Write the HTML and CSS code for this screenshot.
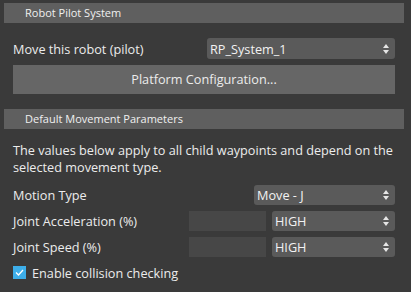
FILE: index.html
```html
<!DOCTYPE html>
<html lang="en">
<head>
    <meta charset="UTF-8">
    <title>Robot Pilot System</title>
    <link rel="stylesheet" href="styles.css">
</head>
<body>
    <div class="panel">
        <div class="section-head">Robot Pilot System</div>
        <div class="section">
            <div class="row pilot-row">
                <span class="label">Move this robot (pilot)</span>
                <div class="select">
                    <span>RP_System_1</span>
                    <svg class="arrows" width="6" height="10" viewBox="0 0 6 10"><path d="M3 0L6 4H0Z M3 10L6 6H0Z" fill="#e6e6e6"/></svg>
                </div>
            </div>
            <div class="button">Platform Configuration...</div>
        </div>

        <div class="section-head">Default Movement Parameters</div>
        <div class="section">
            <p class="note">The values below apply to all child waypoints and depend on the selected movement type.</p>
            <div class="params">
                <span class="label">Motion Type</span>
                <div class="select motion">
                    <span>Move - J</span>
                    <svg class="arrows" width="6" height="10" viewBox="0 0 6 10"><path d="M3 0L6 4H0Z M3 10L6 6H0Z" fill="#e6e6e6"/></svg>
                </div>

                <span class="label">Joint Acceleration (%)</span>
                <div class="field"></div>
                <div class="select">
                    <span>HIGH</span>
                    <svg class="arrows" width="6" height="10" viewBox="0 0 6 10"><path d="M3 0L6 4H0Z M3 10L6 6H0Z" fill="#e6e6e6"/></svg>
                </div>

                <span class="label">Joint Speed (%)</span>
                <div class="field"></div>
                <div class="select">
                    <span>HIGH</span>
                    <svg class="arrows" width="6" height="10" viewBox="0 0 6 10"><path d="M3 0L6 4H0Z M3 10L6 6H0Z" fill="#e6e6e6"/></svg>
                </div>
            </div>
            <label class="check">
                <span class="box"><svg width="9" height="7" viewBox="0 0 9 7"><path d="M1 3.5L3.5 6L8 1" fill="none" stroke="#ffffff" stroke-width="1.3"/></svg></span>
                Enable collision checking
            </label>
        </div>
    </div>
</body>
</html>
```

FILE: styles.css
```css
body {
    margin: 0;
    background: #3a3a3a;
    color: #ececec;
    font-family: "Open Sans", sans-serif;
    font-size: 12.7px;
}

.panel {
    padding-top: 3px;
}

.section-head {
    height: 20px;
    line-height: 20px;
    margin: 0 7px 0 4px;
    padding-left: 21px;
    background: #5f5f5f;
    font-size: 11px;
    color: #f0f0f0;
}

.section {
    padding: 15px 16px 15px 13px;
}

.row {
    display: flex;
    align-items: center;
}

.pilot-row {
    justify-content: space-between;
    height: 21px;
}

.pilot-row .select {
    width: 188px;
    height: 21px;
}

.select {
    display: flex;
    align-items: center;
    justify-content: space-between;
    box-sizing: border-box;
    height: 20px;
    padding: 0 6px 0 3px;
    background: #5a5a5a;
    border-radius: 3px;
    color: #f2f2f2;
}

.arrows {
    display: block;
}

.button {
    margin-top: 6px;
    height: 29px;
    line-height: 29px;
    text-align: center;
    background: #666666;
}

.note {
    margin: -2px 0 0;
    line-height: 17px;
}

.params {
    display: grid;
    grid-template-columns: 170px 77px 123px;
    column-gap: 6px;
    row-gap: 6px;
    grid-auto-rows: 20px;
    align-items: center;
    margin-top: 9px;
}

.params .motion {
    grid-column: 2 / 4;
    margin-left: 65px;
}

.field {
    height: 20px;
    background: #474747;
}

.params .select {
    height: 20px;
}

.check {
    display: flex;
    align-items: center;
    gap: 6px;
    margin-top: 9px;
    height: 13px;
}

.box {
    display: flex;
    align-items: center;
    justify-content: center;
    width: 13px;
    height: 13px;
    background: #3daee9;
}
```
